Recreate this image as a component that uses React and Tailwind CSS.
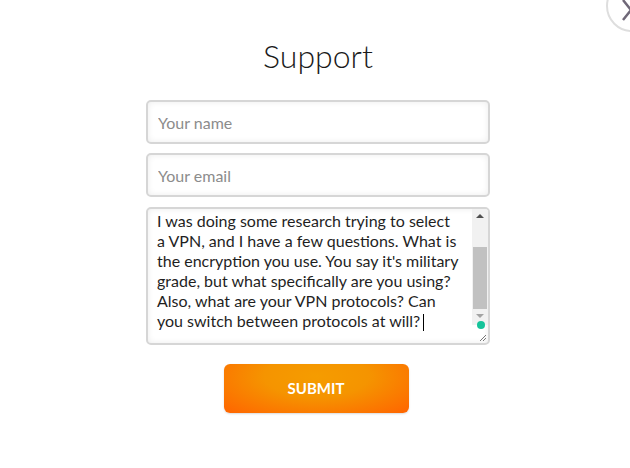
import { useState } from "react";

const font = { fontFamily: "Lato, 'Open Sans', sans-serif" };

const lines = [
  "I was doing some research trying to select",
  "a VPN, and I have a few questions. What is",
  "the encryption you use. You say it's military",
  "grade, but what specifically are you using?",
  "Also, what are your VPN protocols? Can",
  "you switch between protocols at will?",
];

const fieldCls =
  "w-full h-[44px] rounded-[5px] border-2 border-[#d6d6d6] bg-white px-[10px] text-[16px] text-[#222] placeholder:text-[#8c8c8c] shadow-[inset_0_0_6px_rgba(0,0,0,0.08)] outline-none";

export default function App() {
  const [name, setName] = useState("");
  const [email, setEmail] = useState("");

  return (
    <div className="relative w-[630px] h-[468px] bg-white overflow-hidden font-['Lato','Open_Sans',sans-serif]">
      {/* close button, mostly off-screen */}
      <button className="absolute left-[606px] top-[-20px] w-[52px] h-[52px] rounded-full border-2 border-[#dedede] bg-white">
        <svg className="absolute left-[-2px] top-[-2px]" width="52" height="52" viewBox="0 0 52 52">
          <path d="M17 20 L33 40 M17 40 L33 20" stroke="#6f6878" strokeWidth="2.5" fill="none" />
        </svg>
      </button>

      <div className="flex flex-col items-center pt-[36px] pl-[6px]">
        <h1 className="text-[32px] font-light text-[#1a1a1a] leading-[40px]" style={font}>
          Support
        </h1>

        <form className="w-[344px] mt-[24px] flex flex-col" onSubmit={(e) => e.preventDefault()}>
          <input className={fieldCls} placeholder="Your name" value={name} onChange={(e) => setName(e.target.value)} />
          <input className={`${fieldCls} mt-[9px]`} placeholder="Your email" value={email} onChange={(e) => setEmail(e.target.value)} />

          {/* message box with scrolled content */}
          <div className="relative mt-[10px] h-[138px] rounded-[5px] border-2 border-[#d6d6d6] bg-white shadow-[inset_0_0_6px_rgba(0,0,0,0.08)] overflow-hidden">
            <div className="pl-[9px] pt-[2px] pr-[20px] text-[16px] leading-[20px] text-[#1f1f1f]">
              {lines.map((l, i) => (
                <div key={i} className="whitespace-nowrap">
                  {l}
                  {i === lines.length - 1 && <span className="inline-block w-px h-[17px] bg-black align-middle ml-[3px]" />}
                </div>
              ))}
            </div>

            {/* scrollbar */}
            <div className="absolute right-0 top-0 w-[16px] h-[116px] bg-[#f1f1f1] flex flex-col items-center">
              <div className="mt-[5px] w-0 h-0 border-l-[4px] border-r-[4px] border-b-[4px] border-l-transparent border-r-transparent border-b-[#505050]" />
              <div className="mt-[29px] w-[14px] h-[62px] bg-[#c1c1c1]" />
              <div className="mt-[5px] w-0 h-0 border-l-[4px] border-r-[4px] border-t-[4px] border-l-transparent border-r-transparent border-t-[#a3a3a3]" />
            </div>
            <span className="absolute right-[3px] bottom-[14px] w-[8px] h-[8px] rounded-full bg-[#15c39a]" />
            <svg className="absolute right-[1px] bottom-[1px]" width="10" height="10" viewBox="0 0 10 10">
              <path d="M9 3 L3 9 M9 6 L6 9" stroke="#777" strokeWidth="1" />
            </svg>
          </div>

          <div className="flex justify-center mt-[19px] pr-[4px]">
            <button
              type="submit"
              className="w-[185px] h-[49px] rounded-[6px] text-white text-[15px] font-bold bg-[radial-gradient(ellipse_at_50%_25%,#f59c00_0%,#f59400_40%,#ff6400_100%)] shadow-[0_1px_2px_rgba(0,0,0,0.15)]"
              style={font}
            >
              SUBMIT
            </button>
          </div>
        </form>
      </div>
    </div>
  );
}
